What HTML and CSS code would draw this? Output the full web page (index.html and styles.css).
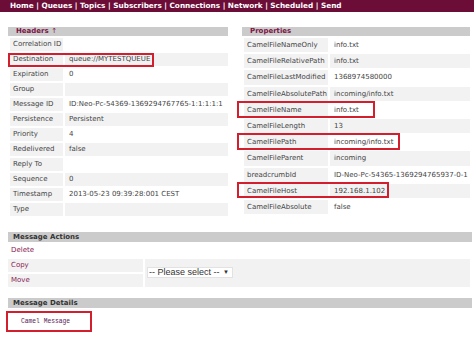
FILE: index.html
```html
<!DOCTYPE html>
<html lang="en">
<head>
<meta charset="utf-8">
<title>Message</title>
<link rel="stylesheet" href="styles.css">
</head>
<body>
<nav class="topnav">
  <a href="#">Home</a> | <a href="#">Queues</a> | <a href="#">Topics</a> | <a href="#">Subscribers</a> | <a href="#">Connections</a> | <a href="#">Network</a> | <a href="#">Scheduled</a> | <a href="#">Send</a>
</nav>
<main class="page">
  <div class="panels">
    <section class="panel panel-headers">
      <h2 class="panel-title">Headers <span class="arrow">&#8593;</span></h2>
      <table class="kv kv-headers">
        <tr><td class="k">Correlation ID</td><td class="v"></td></tr>
        <tr><td class="k mark-wrap">Destination<span class="mark mark-dest"></span></td><td class="v">queue://MYTESTQUEUE</td></tr>
        <tr><td class="k">Expiration</td><td class="v">0</td></tr>
        <tr><td class="k">Group</td><td class="v"></td></tr>
        <tr><td class="k">Message ID</td><td class="v">ID:Neo-Pc-54369-1369294767765-1:1:1:1:1</td></tr>
        <tr><td class="k">Persistence</td><td class="v">Persistent</td></tr>
        <tr><td class="k">Priority</td><td class="v">4</td></tr>
        <tr><td class="k">Redelivered</td><td class="v">false</td></tr>
        <tr><td class="k">Reply To</td><td class="v"></td></tr>
        <tr><td class="k">Sequence</td><td class="v">0</td></tr>
        <tr><td class="k">Timestamp</td><td class="v">2013-05-23 09:39:28:001 CEST</td></tr>
        <tr><td class="k">Type</td><td class="v"></td></tr>
      </table>
    </section>
    <section class="panel panel-props">
      <h2 class="panel-title">Properties</h2>
      <table class="kv kv-props">
        <tr><td class="k">CamelFileNameOnly</td><td class="v">info.txt</td></tr>
        <tr><td class="k">CamelFileRelativePath</td><td class="v">info.txt</td></tr>
        <tr><td class="k">CamelFileLastModified</td><td class="v">1368974580000</td></tr>
        <tr><td class="k">CamelFileAbsolutePath</td><td class="v">incoming/info.txt</td></tr>
        <tr><td class="k mark-wrap">CamelFileName<span class="mark mark-name"></span></td><td class="v">info.txt</td></tr>
        <tr><td class="k">CamelFileLength</td><td class="v">13</td></tr>
        <tr><td class="k mark-wrap">CamelFilePath<span class="mark mark-path"></span></td><td class="v">incoming/info.txt</td></tr>
        <tr><td class="k">CamelFileParent</td><td class="v">incoming</td></tr>
        <tr><td class="k">breadcrumbId</td><td class="v">ID-Neo-Pc-54365-1369294765937-0-1</td></tr>
        <tr><td class="k mark-wrap">CamelFileHost<span class="mark mark-host"></span></td><td class="v">192.168.1.102</td></tr>
        <tr><td class="k">CamelFileAbsolute</td><td class="v">false</td></tr>
      </table>
    </section>
  </div>

  <section class="actions">
    <h2 class="bar">Message Actions</h2>
    <table class="actions-table">
      <tr><td class="act act-plain"><a href="#">Delete</a></td><td class="plain"></td></tr>
      <tr><td class="act"><a href="#">Copy</a></td><td class="sel" rowspan="2"><div class="select"><span>-- Please select --</span><span class="caret">&#9660;</span></div></td></tr>
      <tr><td class="act"><a href="#">Move</a></td></tr>
    </table>
  </section>

  <section class="details">
    <h2 class="bar">Message Details</h2>
    <div class="msg-box"><pre class="msg">Camel Message</pre></div>
  </section>
</main>
</body>
</html>
```

FILE: styles.css
```css
html, body {
  margin: 0;
  padding: 0;
  background: #ffffff;
}

body {
  font-family: "DejaVu Sans", Verdana, sans-serif;
  font-size: 7px;
  color: #444444;
  width: 474px;
  height: 338px;
  overflow: hidden;
}

.topnav {
  height: 12px;
  line-height: 12px;
  background: #6c0d37;
  color: #ffffff;
  font-weight: bold;
  font-size: 7.3px;
  padding-left: 10px;
  white-space: nowrap;
}

.topnav a {
  color: #ffffff;
  text-decoration: none;
}

.page {
  padding: 15px 2px 0 8px;
}

.panels {
  display: flex;
  align-items: flex-start;
  gap: 14px;
}

.panel-headers {
  width: 220px;
}

.panel-props {
  width: 228px;
}

.panel-title,
.bar {
  margin: 0;
  height: 9px;
  line-height: 9px;
  background: #cbcbcb;
  font-size: 7px;
  font-weight: bold;
  padding-left: 8px;
}

.panel-title {
  color: #7d1446;
}

.arrow {
  font-weight: normal;
}

.kv {
  border-collapse: separate;
  border-spacing: 2px;
  width: calc(100% + 2px);
  table-layout: fixed;
}

.kv td {
  padding: 0 3px;
  height: 13px;
  line-height: 13px;
  white-space: nowrap;
  overflow: visible;
}

.kv .k {
  background: #f2f2f2;
  color: #444444;
}

.kv .v {
  padding-left: 4px;
}

.kv tr:nth-child(even) .v {
  background: #f2f2f2;
}

.kv-headers .k {
  width: 47px;
}

.kv-props .k {
  width: 78px;
}

.kv-props td {
  height: 14.2px;
  line-height: 14.2px;
}

.mark-wrap {
  position: relative;
}

.mark {
  position: absolute;
  border: 2px solid #d31f2d;
  box-sizing: border-box;
  pointer-events: none;
}

.mark-dest {
  left: -2px;
  top: 0;
  height: 14px;
  width: 146px;
}

.mark-name {
  left: -7px;
  top: -2px;
  height: 17px;
  width: 138px;
}

.mark-path {
  left: -7px;
  top: -2px;
  height: 17px;
  width: 163px;
}

.mark-host {
  left: -7px;
  top: -2px;
  height: 16px;
  width: 152px;
}

.actions {
  margin-top: 14px;
}

.bar {
  height: 10px;
  line-height: 10px;
  color: #333333;
  padding-left: 5px;
}

.actions-table {
  border-collapse: separate;
  border-spacing: 2px;
  width: calc(100% + 2px);
  margin-left: -2px;
  table-layout: fixed;
}

.actions-table td {
  height: 13px;
  line-height: 13px;
  padding: 0 3px;
  background: #f2f2f2;
}

.actions-table .act {
  width: 129px;
}

.actions-table .act-plain,
.actions-table .plain {
  background: #ffffff;
}

.actions-table a {
  color: #8a2252;
  text-decoration: none;
}

.actions-table .sel {
  padding: 0 0 0 2px;
  vertical-align: middle;
}

.select {
  display: inline-flex;
  align-items: center;
  justify-content: space-between;
  width: 86px;
  height: 11px;
  box-sizing: border-box;
  background: #ffffff;
  border: 1px solid #e2e2e2;
  font-family: "Liberation Sans", Arial, sans-serif;
  font-size: 9px;
  color: #333333;
  padding: 0 3px 0 1px;
  line-height: 9px;
}

.caret {
  font-size: 6px;
  color: #333333;
}

.details {
  margin-top: 9px;
}

.msg-box {
  margin: 3px 0 0 -2px;
  width: 86px;
  height: 21px;
  box-sizing: border-box;
  border: 2px solid #d31f2d;
  display: flex;
  align-items: center;
}

.msg {
  margin: 0 0 0 13px;
  font-family: "Liberation Mono", "Courier New", monospace;
  font-size: 6.3px;
  color: #5b2459;
}
```
